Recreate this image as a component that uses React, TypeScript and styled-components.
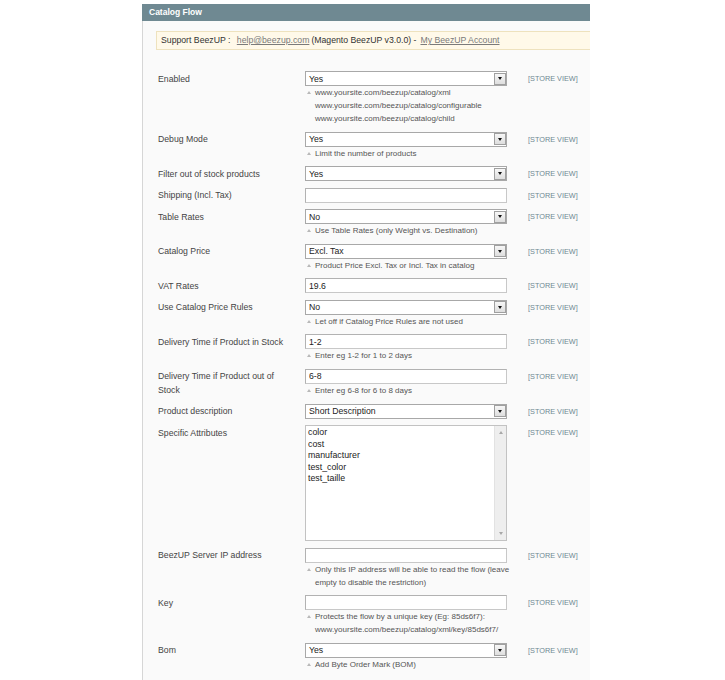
import React from 'react';
import styled, { createGlobalStyle } from 'styled-components';

const GlobalStyle = createGlobalStyle`
  html, body { margin: 0; padding: 0; background: #ffffff; }
  body { font-family: "Liberation Sans", Arial, Helvetica, sans-serif; }
`;

const Page = styled.div`
  padding: 4px 0 0 142px;
  width: 448px;
`;

const Head = styled.h4`
  margin: 0;
  height: 16.5px;
  line-height: 16.5px;
  background: #6f8992;
  color: #ffffff;
  font-size: 8.5px;
  font-weight: bold;
  padding-left: 7px;
  box-sizing: border-box;
`;

const Body = styled.div`
  background: #fafafa;
  border-left: 1px solid #d6d6d6;
  height: 660px;
  overflow: hidden;
`;

const Notice = styled.div`
  margin: 10.5px 0 0 13px;
  height: 19px;
  box-sizing: border-box;
  border: 1px solid #eee2be;
  border-right: none;
  background: #fff9e9;
  font-size: 8.7px;
  line-height: 17px;
  padding-left: 4px;
  color: #333333;
  white-space: nowrap;
`;

const NoticeLink = styled.a`
  color: #7a7a7a;
  text-decoration: underline;
  margin: 0 2px 0 4px;
`;

const Form = styled.div`
  margin-top: 21px;
  display: flex;
  flex-direction: column;
`;

const Row = styled.div`
  display: grid;
  grid-template-columns: 147px 202px 1fr;
  padding: 0 0 6.5px 15px;
`;

const Label = styled.div`
  font-size: 8.7px;
  color: #444444;
  line-height: 14px;
  padding-top: 0.5px;
  max-width: 132px;
`;

const Value = styled.div`
  display: flex;
  flex-direction: column;
`;

const SelectBox = styled.div`
  height: 15px;
  box-sizing: border-box;
  border: 1px solid #a8a8a8;
  background: #ffffff;
  display: flex;
  align-items: center;
  justify-content: space-between;
  padding: 0 0.5px 0 3px;
  font-size: 8.7px;
  color: #222222;
`;

const ArrowButton = styled.span`
  width: 12px;
  height: 12px;
  box-sizing: border-box;
  border: 1px solid #a0a0a0;
  background: linear-gradient(#f7f7f7, #dedede);
  display: flex;
  align-items: center;
  justify-content: center;
  &::after {
    content: '';
    border-left: 2.5px solid transparent;
    border-right: 2.5px solid transparent;
    border-top: 3px solid #111111;
  }
`;

const TextInput = styled.input`
  width: 202px;
  height: 15px;
  box-sizing: border-box;
  border: 1px solid;
  border-color: #b2b2b2 #c8c8c8 #c8c8c8 #b2b2b2;
  background: #ffffff;
  font-family: inherit;
  font-size: 8.7px;
  color: #222222;
  padding: 0 3px;
  margin: 0;
  outline: none;
`;

const MultiBox = styled.div`
  height: 116px;
  box-sizing: border-box;
  border: 1px solid #c2c2c2;
  background: #ffffff;
  display: flex;
`;

const OptionList = styled.div`
  flex: 1;
  padding: 1px 2px;
  font-size: 8.8px;
  line-height: 11.5px;
  color: #222222;
`;

const ScrollTrack = styled.div`
  width: 11px;
  background: #eeeeee;
  border-left: 1px solid #e2e2e2;
  display: flex;
  flex-direction: column;
  justify-content: space-between;
  align-items: center;
  padding: 5px 0;
`;

const ScrollArrow = styled.span<{ $down?: boolean }>`
  width: 0;
  height: 0;
  border-left: 2.5px solid transparent;
  border-right: 2.5px solid transparent;
  ${(p) => (p.$down ? 'border-top: 3px solid #a8a8a8;' : 'border-bottom: 3px solid #a8a8a8;')}
`;

const Note = styled.div`
  display: flex;
  font-size: 8px;
  line-height: 13px;
  color: #555555;
  white-space: nowrap;
`;

const Marker = styled.span`
  width: 10px;
  flex-shrink: 0;
  display: flex;
  justify-content: flex-start;
  padding: 5px 0 0 2px;
  box-sizing: border-box;
  height: 13px;
  &::before {
    content: '';
    width: 0;
    height: 0;
    border-left: 2.5px solid transparent;
    border-right: 2.5px solid transparent;
    border-bottom: 3.5px solid #b8b8b8;
  }
`;

const Scope = styled.div`
  padding-left: 21px;
  font-size: 7.3px;
  line-height: 15px;
  color: #6f8992;
  text-transform: uppercase;
  white-space: nowrap;
`;

type Field = {
  label: string;
  kind: 'select' | 'input' | 'multi';
  value?: string;
  options?: string[];
  note?: string[];
};

const fields: Field[] = [
  {
    label: 'Enabled',
    kind: 'select',
    value: 'Yes',
    note: [
      'www.yoursite.com/beezup/catalog/xml',
      'www.yoursite.com/beezup/catalog/configurable',
      'www.yoursite.com/beezup/catalog/child',
    ],
  },
  { label: 'Debug Mode', kind: 'select', value: 'Yes', note: ['Limit the number of products'] },
  { label: 'Filter out of stock products', kind: 'select', value: 'Yes' },
  { label: 'Shipping (Incl. Tax)', kind: 'input', value: '' },
  { label: 'Table Rates', kind: 'select', value: 'No', note: ['Use Table Rates (only Weight vs. Destination)'] },
  { label: 'Catalog Price', kind: 'select', value: 'Excl. Tax', note: ['Product Price Excl. Tax or Incl. Tax in catalog'] },
  { label: 'VAT Rates', kind: 'input', value: '19.6' },
  { label: 'Use Catalog Price Rules', kind: 'select', value: 'No', note: ['Let off if Catalog Price Rules are not used'] },
  { label: 'Delivery Time if Product in Stock', kind: 'input', value: '1-2', note: ['Enter eg 1-2 for 1 to 2 days'] },
  { label: 'Delivery Time if Product out of Stock', kind: 'input', value: '6-8', note: ['Enter eg 6-8 for 6 to 8 days'] },
  { label: 'Product description', kind: 'select', value: 'Short Description' },
  {
    label: 'Specific Attributes',
    kind: 'multi',
    options: ['color', 'cost', 'manufacturer', 'test_color', 'test_taille'],
  },
  {
    label: 'BeezUP Server IP address',
    kind: 'input',
    value: '',
    note: ['Only this IP address will be able to read the flow (leave', 'empty to disable the restriction)'],
  },
  {
    label: 'Key',
    kind: 'input',
    value: '',
    note: ['Protects the flow by a unique key (Eg: 85ds6f7):', 'www.yoursite.com/beezup/catalog/xml/key/85ds6f7/'],
  },
  { label: 'Bom', kind: 'select', value: 'Yes', note: ['Add Byte Order Mark (BOM)'] },
];

function Control({ field }: { field: Field }) {
  if (field.kind === 'select') {
    return (
      <SelectBox role="combobox" aria-label={field.label}>
        <span>{field.value}</span>
        <ArrowButton />
      </SelectBox>
    );
  }
  if (field.kind === 'multi') {
    return (
      <MultiBox role="listbox" aria-label={field.label}>
        <OptionList>
          {field.options?.map((o) => (
            <div key={o}>{o}</div>
          ))}
        </OptionList>
        <ScrollTrack>
          <ScrollArrow />
          <ScrollArrow $down />
        </ScrollTrack>
      </MultiBox>
    );
  }
  return <TextInput type="text" readOnly value={field.value} aria-label={field.label} />;
}

export default function App() {
  return (
    <>
      <GlobalStyle />
      <Page>
        <Head>Catalog Flow</Head>
        <Body>
          <Notice>
            Support BeezUP : <NoticeLink href="#">help@beezup.com</NoticeLink>(Magento BeezUP v3.0.0) -
            <NoticeLink href="#">My BeezUP Account</NoticeLink>
          </Notice>
          <Form>
            {fields.map((f) => (
              <Row key={f.label}>
                <Label>{f.label}</Label>
                <Value>
                  <Control field={f} />
                  {f.note && (
                    <Note>
                      <Marker />
                      <span>
                        {f.note.map((line, i) => (
                          <React.Fragment key={i}>
                            {i > 0 && <br />}
                            {line}
                          </React.Fragment>
                        ))}
                      </span>
                    </Note>
                  )}
                </Value>
                <Scope>[Store View]</Scope>
              </Row>
            ))}
          </Form>
        </Body>
      </Page>
    </>
  );
}
